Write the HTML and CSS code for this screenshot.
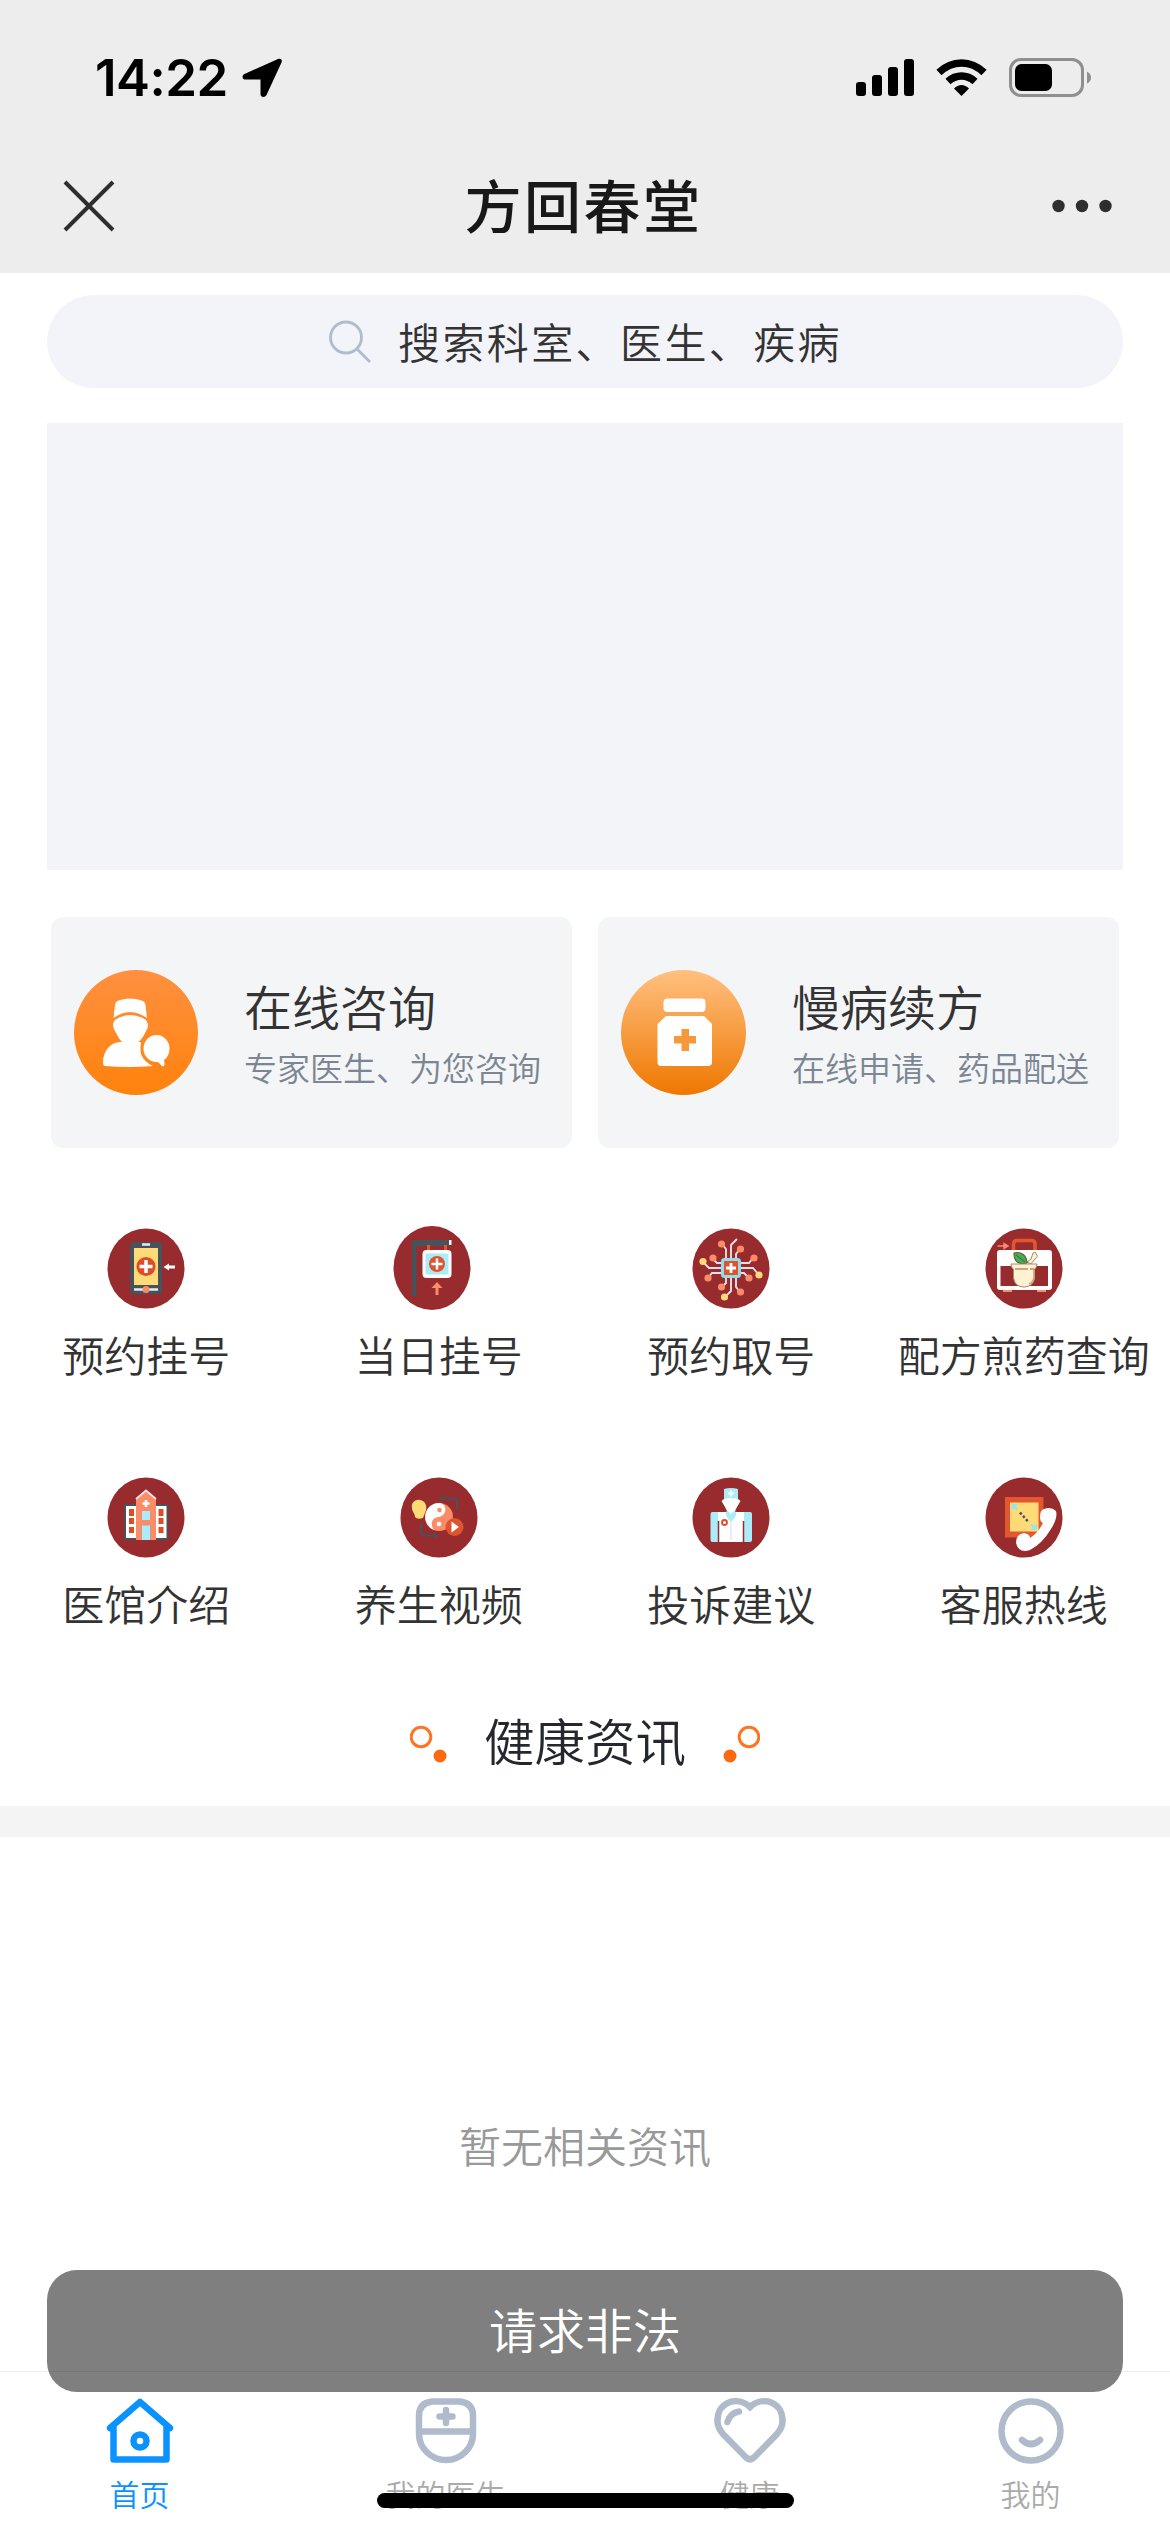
FILE: index.html
```html
<!DOCTYPE html>
<html lang="zh-CN">
<head>
  <meta charset="UTF-8">
  <meta name="viewport" content="width=device-width, initial-scale=1.0">
  <title>方回春堂</title>
  <link rel="stylesheet" href="styles.css">
</head>
<body>

  <header>
    <div class="status-bar">
      <div class="status-left">
        <span class="time">14:22</span>
        <svg width="42" height="42" viewBox="0 0 42 42"><path d="M37 2C40 1 41.500 3 40.500 5.500L25.500 38C24 41 19.500 40.500 19.500 37V22.500H4.500C1 22.500 .5 18.500 3.500 17Z" fill="#000"/></svg>
      </div>
      <div class="status-right">
        <svg width="60" height="40" viewBox="0 0 60 40" fill="#000">
          <rect x="0" y="24" width="10" height="14" rx="3"/>
          <rect x="16" y="17" width="10" height="21" rx="3"/>
          <rect x="32" y="9" width="10" height="29" rx="3"/>
          <rect x="48" y="1" width="10" height="37" rx="3"/>
        </svg>
        <svg class="wifi" width="52" height="40" viewBox="0 0 52 40" fill="none" stroke="#000" stroke-width="7.500">
          <path d="M3 14.500Q13 5 25.500 5T48 14.500"/>
          <path d="M12 23.500Q18 18 25.500 18T39 23.500"/>
          <path d="M25.500 38L18 30.500Q21.500 27 25.500 27T33 30.500Z" fill="#000" stroke="none"/>
        </svg>
        <svg width="84" height="40" viewBox="0 0 84 40">
          <rect x="1.500" y="1.500" width="72" height="36" rx="10.500" fill="none" stroke="#8f8f8f" stroke-width="3"/>
          <rect x="6" y="6" width="37" height="27" rx="6.500" fill="#000"/>
          <path d="M78 13.500Q82 15.500 82 19.500T78 25.500Z" fill="#8f8f8f"/>
        </svg>
      </div>
    </div>
    <div class="nav-bar">
      <svg class="close" width="52" height="52" viewBox="0 0 52 52" stroke="#2e2e2e" stroke-width="4"><path d="M2 2L50 50M50 2L2 50"/></svg>
      <h1>方回春堂</h1>
      <svg width="60" height="14" viewBox="0 0 60 14" fill="#2e2e2e"><circle cx="6.500" cy="7" r="6.200"/><circle cx="30" cy="7" r="6.200"/><circle cx="53.500" cy="7" r="6.200"/></svg>
    </div>
  </header>

  <main>
    <div class="search">
      <svg width="44" height="44" viewBox="0 0 44 44" fill="none" stroke="#afbccd" stroke-width="2.800"><circle cx="18" cy="17.500" r="15.500"/><path d="M29 29L42 42"/></svg>
      <span>搜索科室、医生、疾病</span>
    </div>

    <div class="banner"></div>

    <div class="cards">
      <a class="card">
        <svg width="124" height="125" viewBox="0 0 124 125">
          <defs><linearGradient id="g1" x1="0" y1="0" x2="0" y2="1"><stop offset="0" stop-color="#ff9040"/><stop offset="1" stop-color="#ff820c"/></linearGradient></defs>
          <ellipse cx="62" cy="62.500" rx="62" ry="62.500" fill="url(#g1)"/>
          <g fill="#fff">
            <path d="M39.500 48L41 35Q41.500 31 46 30Q56 27 66 30Q71 31 71.500 35L73 48Q56 36 39.500 48Z"/>
            <path d="M41 50Q56 40 72 50Q76 56 72 61Q68 70 64 72Q65 72 67 72Q66 80 67 84Q70 92 79 96Q54 98 31 96Q29 96 29 92C29 80 38 71 48 72Q45 69 41 61Q37 55 41 50Z"/>
            <path d="M95.500 79A13 13.500 0 1 0 83 92Q85 92 86 94Q88 97 90 96Q91 94 90 90Q95.500 86 95.500 79Z"/>
          </g>
        </svg>
        <div class="card-text">
          <h2>在线咨询</h2>
          <p>专家医生、为您咨询</p>
        </div>
      </a>
      <a class="card">
        <svg width="125" height="125" viewBox="0 0 125 125">
          <defs><linearGradient id="g2" x1="0" y1="0" x2="0" y2="1"><stop offset="0" stop-color="#ffc080"/><stop offset="1" stop-color="#ee7700"/></linearGradient></defs>
          <circle cx="62.500" cy="62.500" r="62.500" fill="url(#g2)"/>
          <g fill="#fff">
            <rect x="42.500" y="28.500" width="42" height="13.500" rx="4"/>
            <path d="M45 46H83L91 54V92Q91 96 87 96H40Q36.500 96 36.500 92V54Z"/>
          </g>
          <path d="M60.500 59H68V66H75V73.500H68V81H60.500V73.500H53V66H60.500Z" fill="#f7983a"/>
        </svg>
        <div class="card-text">
          <h2>慢病续方</h2>
          <p>在线申请、药品配送</p>
        </div>
      </a>
    </div>

    <div class="menu">
      <a class="menu-item">
        <svg width="78" height="84" viewBox="0 0 78 84">
          <ellipse cx="39" cy="42.500" rx="38.500" ry="40" fill="#982b2d"/>
          <rect x="23" y="16" width="32" height="52" rx="4" fill="#47525b"/>
          <rect x="27" y="22" width="24" height="37" fill="#ffda76"/>
          <path d="M35 18.500H43M27 63.500H51" stroke="#e8ecf4" stroke-width="2.500"/>
          <circle cx="39" cy="63.500" r="3.500" fill="#fc8b68"/>
          <circle cx="39" cy="40.500" r="9.500" fill="#de4c25"/>
          <path d="M39 34V47M32.500 40.500H45.500" stroke="#fff" stroke-width="3.500"/>
          <path d="M56.500 41L62 37.500V39.500H68V42.500H62V44.500Z" fill="#fff"/>
        </svg>
        <span>预约挂号</span>
      </a>
      <a class="menu-item">
        <svg class="sign" width="78" height="84" viewBox="0 0 78 84">
          <ellipse cx="39" cy="42" rx="38.500" ry="42" fill="#982b2d"/>
          <path d="M19 14H56V20H23.500V70H19Z" fill="#47525b"/>
          <path d="M56 14H58.500V19H56Z" fill="#fff"/>
          <path d="M35.500 19V26M52.500 19V26" stroke="#e2572d" stroke-width="3"/>
          <rect x="29.500" y="24" width="29" height="28" rx="4" fill="#fff"/>
          <rect x="32.500" y="27.500" width="23" height="21" rx="2" fill="#acebf8"/>
          <circle cx="44" cy="38" r="8" fill="#de5430"/>
          <path d="M44 32.500V43.500M38.500 38H49.500" stroke="#fff" stroke-width="2.500"/>
          <path d="M44 56L49.500 62H45.500V69H42.500V62H38.500Z" fill="#fc8b68"/>
        </svg>
        <span>当日挂号</span>
      </a>
      <a class="menu-item">
        <svg width="78" height="84" viewBox="0 0 78 84">
          <ellipse cx="39" cy="42.500" rx="38.500" ry="40" fill="#982b2d"/>
          <g fill="none" stroke="#e5dfe5" stroke-width="1.900">
            <path d="M34 34V23L30 18M39 34V19L45 13M44 34V28L48 23"/>
            <path d="M31 37H25L21 33M31 42H17L11 36M31 47H20L16 52"/>
            <path d="M47 37H57L61 32M47 42H61L67 49M47 47H52L57 52"/>
            <path d="M34 50V57L30 61M39 50V65L33 71M44 50V61L48 66"/>
          </g>
          <g fill="#fc8b68">
            <circle cx="29.500" cy="18" r="3.600"/><circle cx="48.500" cy="23" r="3.600"/><circle cx="21" cy="32" r="3.600"/><circle cx="62" cy="32" r="3.600"/>
            <circle cx="16" cy="52" r="3.600"/><circle cx="57" cy="52" r="3.600"/><circle cx="29.500" cy="61" r="3.600"/><circle cx="48.500" cy="66" r="3.600"/>
          </g>
          <g fill="#ffda76"><circle cx="11" cy="35.500" r="3.600"/><circle cx="67" cy="49" r="3.600"/><circle cx="32.500" cy="71" r="3.600"/></g>
          <rect x="30.500" y="33.500" width="17" height="17" rx="2" fill="#de5430" stroke="#95dce6" stroke-width="3"/>
          <path d="M39 37V47M34 42H44" stroke="#fff" stroke-width="2.800"/>
        </svg>
        <span>预约取号</span>
      </a>
      <a class="menu-item">
        <svg width="78" height="84" viewBox="0 0 78 84">
          <ellipse cx="39" cy="42.500" rx="38.500" ry="40" fill="#982b2d"/>
          <path d="M28.500 25V18Q28.500 14.500 32 14.500H46.500Q50 14.500 50 18V25" fill="none" stroke="#e2572d" stroke-width="3.500"/>
          <path d="M12.500 20H19V17.500L23 20L19 22.500V20" fill="#fc8b68" stroke="#fc8b68" stroke-width="1.500"/>
          <path d="M18 62H27V66H18ZM52 62H61V66H52Z" fill="#fc8b68"/>
          <rect x="12" y="24" width="55" height="40" rx="3" fill="#fff"/>
          <rect x="15.500" y="40" width="47.500" height="20" fill="#982b2d"/>
          <path d="M46 38L42 36L46 33L48 27Q51 25 51 28Q54 30 50 33L45 39" fill="#fff1d2" stroke="#a68a6c" stroke-width="1"/>
          <path d="M29 27Q41 25 42 37Q29 40 29 27Z" fill="#49ad56" stroke="#5c6637" stroke-width="1.200"/>
          <path d="M31 29L40 36" stroke="#286b36" stroke-width="1"/>
          <path d="M26 38H52Q52 42 49.500 43V52Q48 61 39 61T28.500 52V43Q26 42 26 38Z" fill="#fff1d2" stroke="#a68a6c" stroke-width="1"/>
          <path d="M30 43H43M45 43H49M49 44V52Q48 57 44 58" fill="none" stroke="#c9a77e" stroke-width="1.800"/>
        </svg>
        <span>配方煎药查询</span>
      </a>
      <a class="menu-item">
        <svg width="78" height="84" viewBox="0 0 78 84">
          <ellipse cx="39" cy="42.500" rx="38.500" ry="40" fill="#982b2d"/>
          <rect x="17" y="29" width="44.500" height="36" fill="#47525b"/>
          <rect x="19" y="31" width="40.500" height="32" fill="#fff"/>
          <path d="M22 34H27V41H22ZM22 43H27V49H22ZM22 52H27V58H22ZM51.500 34H56.500V41H51.500ZM51.500 43H56.500V49H51.500ZM51.500 52H56.500V58H51.500Z" fill="#de4c25"/>
          <path d="M29 65V24L39 15.500L49 24V65Z" fill="#fc8b68"/>
          <path d="M29 24L39 15.500L49 24" fill="none" stroke="#f7e8e6" stroke-width="1.800"/>
          <path d="M39 25V32M35.500 28.500H42.500" stroke="#fff" stroke-width="2.500"/>
          <path d="M35 36H43V45H35ZM35 50H43V65H35Z" fill="#acebf8"/>
          <path d="M34 65V50H44V65" fill="none" stroke="#d99788" stroke-width="1"/>
        </svg>
        <span>医馆介绍</span>
      </a>
      <a class="menu-item">
        <svg width="78" height="84" viewBox="0 0 78 84">
          <ellipse cx="39" cy="42.500" rx="38.500" ry="40" fill="#982b2d"/>
          <path d="M57 35V25Q57 23.500 55 23.500H42M21 49V58Q21 60.500 24 60.500H36" fill="none" stroke="#47525b" stroke-width="2"/>
          <path d="M39.500 23.500L44 20.500V26.500ZM39 60.500L34 57.500V63.500Z" fill="#47525b"/>
          <path d="M20 25C15 24 11 28 12 33C12 37 15 38 15 42Q17 45 23 43L26 35C27 30 25 26 20 25Z" fill="#ffda76"/>
          <circle cx="39" cy="42" r="14" fill="#fc8b68"/>
          <path d="M39 28A14 14 0 0 0 34 55C29 48 33 42 39 42C48 40 47 28 39 28Z" fill="#fff"/>
          <circle cx="39.500" cy="35" r="2.300" fill="#fc8b68"/><circle cx="39" cy="49" r="2.300" fill="#fff"/>
          <circle cx="54.500" cy="52" r="9" fill="#de5430"/>
          <path d="M51.500 46.500L59 52L51.500 57.500Z" fill="#fff"/>
        </svg>
        <span>养生视频</span>
      </a>
      <a class="menu-item">
        <svg width="78" height="84" viewBox="0 0 78 84">
          <ellipse cx="39" cy="42.500" rx="38.500" ry="40" fill="#982b2d"/>
          <rect x="18.500" y="37" width="41.500" height="30" rx="2" fill="#acebf8"/>
          <path d="M26 37H52V67H26Z" fill="#fff"/>
          <path d="M26.500 46V67M51.500 46V67" stroke="#982b2d" stroke-width="1.500"/>
          <path d="M32 14Q39 12 46 14V25H32Z" fill="#acebf8"/>
          <path d="M39 15.500V21.500M36 18.500H42" stroke="#fff" stroke-width="1.800"/>
          <path d="M32 24Q39 22 46 24L48.500 26L45 32L42 38Q39 41 36 38L33 32L29.500 26Z" fill="#fff"/>
          <path d="M33.500 37L36 36L39 39L42 36L44.500 37Q44 43 39 47Q34 43 33.500 37Z" fill="#acebf8"/>
          <path d="M39 47V65" stroke="#e4e8e8" stroke-width="1.500"/>
          <circle cx="32.500" cy="47.500" r="2.500" fill="none" stroke="#de4c25" stroke-width="1.800"/>
        </svg>
        <span>投诉建议</span>
      </a>
      <a class="menu-item">
        <svg width="78" height="84" viewBox="0 0 78 84">
          <ellipse cx="39" cy="42.500" rx="38.500" ry="40" fill="#982b2d"/>
          <rect x="20" y="22" width="38.500" height="40.500" fill="#e2572d"/>
          <rect x="25" y="27.500" width="28.500" height="29" fill="#ffda76"/>
          <path d="M26.500 29H33L31 31.500L33 34L31.500 35.500L29 33.500L26.500 35.500ZM52 55H45.500L47.500 52.500L45 50L46.500 48.500L49.500 51L52 48.500Z" fill="#95e5ed"/>
          <path d="M35 37.500L43 46.500" stroke="#47525b" stroke-width="2.500" stroke-dasharray="2.500 2"/>
          <path d="M59 34Q66 31 71 36Q73 43 66 54Q57 69 45 75Q34 79 31 68Q31 59 39 58Q45 59 45 63Q53 58 58 48Q55 47 55 42Q55 35 59 34Z" fill="#fff"/>
        </svg>
        <span>客服热线</span>
      </a>
    </div>

    <div class="section-title">
      <svg width="38" height="38" viewBox="0 0 38 38"><circle cx="11" cy="12" r="9.800" fill="none" stroke="#fd7521" stroke-width="3"/><circle cx="30" cy="31" r="6.500" fill="#fa690f"/></svg>
      <h2>健康资讯</h2>
      <svg width="38" height="38" viewBox="0 0 38 38"><circle cx="27" cy="12" r="9.800" fill="none" stroke="#fd7521" stroke-width="3"/><circle cx="8" cy="31" r="6.500" fill="#fa690f"/></svg>
    </div>
    <div class="divider"></div>
    <p class="empty">暂无相关资讯</p>
  </main>

  <nav class="tab-bar">
    <a class="tab active">
      <svg width="68" height="66" viewBox="0 0 68 66" fill="none" stroke="#0a93ff" stroke-width="6.500" stroke-linecap="round" stroke-linejoin="round"><path d="M4 30L34 4L64 30M7.500 29V61.500H60.500V29"/><circle cx="34" cy="43" r="6.500"/></svg>
      <span>首页</span>
    </a>
    <a class="tab tab-wide">
      <svg width="62" height="66" viewBox="0 0 62 66" fill="none" stroke="#afbacb" stroke-width="6.500" stroke-linecap="round"><path d="M17 3.500H45Q58 5 58 18V36C58 50 46 62 31 62S4 50 4 36V18Q4 5 17 3.500ZM4 33.500H58M31 12V25M24.500 18.500H37.500"/></svg>
      <span>我的医生</span>
    </a>
    <a class="tab tab-health">
      <svg width="72" height="66" viewBox="0 0 72 66" fill="none" stroke="#afbacb" stroke-width="6.500" stroke-linecap="round"><path d="M36 9C24-2 4 3 3.500 22Q3 29 9 36L32 59.500Q36 63 40 59.500L63 36Q69 29 68.500 22C68 3 48-2 36 9Z"/><path d="M13.500 24Q16 15 25 13.500"/></svg>
      <span>健康</span>
    </a>
    <a class="tab">
      <svg width="68" height="66" viewBox="0 0 68 66" fill="none" stroke="#afbacb" stroke-width="6.500" stroke-linecap="round"><ellipse cx="34" cy="33" rx="29.500" ry="29.500"/><path d="M25 42Q34 50 43 42"/></svg>
      <span>我的</span>
    </a>
  </nav>

  <div class="toast">请求非法</div>
  <div class="home-indicator"></div>

</body>
</html>
```
FILE: styles.css
```css
* {
  margin: 0;
  padding: 0;
  box-sizing: border-box;
}

body {
  width: 1170px;
  height: 2532px;
  position: relative;
  overflow: hidden;
  background-color: #fff;
  color: #333;
  font-family: "Noto Sans CJK SC", sans-serif;
  font-weight: 350;
}

svg {
  display: block;
  flex-shrink: 0;
}

header {
  height: 273px;
  background-color: #ededed;
}

.status-bar {
  display: flex;
  justify-content: space-between;
  padding: 58px 77px 0 95px;
  height: 140px;
}

.status-left,
.status-right {
  display: flex;
  height: 40px;
  align-items: center;
}

.time {
  font-family: Inter, sans-serif;
  font-size: 51px;
  font-weight: 600;
  letter-spacing: -0.5px;
  color: #000;
  width: 146px;
  margin-top: -2px;
}

.wifi {
  margin: 0 21px 0 20px;
}

.nav-bar {
  display: flex;
  justify-content: space-between;
  align-items: center;
  height: 131px;
  padding: 0 58px 0 63px;
}

.nav-bar h1 {
  font-size: 57px;
  font-weight: 500;
  letter-spacing: 2.5px;
  line-height: 80px;
  padding-bottom: 5px;
  color: #181818;
}

.search {
  display: flex;
  align-items: center;
  justify-content: center;
  gap: 26px;
  height: 93px;
  margin: 22px 47px 35px;
  border-radius: 47px;
  background-color: #f3f4f9;
  font-size: 42px;
  letter-spacing: 2.4px;
}

.search span {
  line-height: 60px;
  padding-bottom: 2px;
}

.banner {
  height: 447px;
  margin: 0 47px;
  background-color: #f2f4f9;
}

.cards {
  display: flex;
  gap: 26px;
  padding: 47px 51px 0;
}

.card {
  display: flex;
  flex: 1;
  align-items: center;
  height: 231px;
  padding-left: 23px;
  border-radius: 12px;
  background-color: #f3f5f7;
}

.card-text {
  margin-left: 46px;
  padding-top: 4px;
}

.card h2 {
  font-size: 48px;
  font-weight: 350;
  line-height: 64px;
}

.card p {
  font-size: 33px;
  line-height: 60px;
  color: #7b8593;
}

.menu {
  display: grid;
  grid-template-columns: repeat(4, 1fr);
  row-gap: 88px;
  padding-top: 78px;
}

.menu-item {
  display: flex;
  flex-direction: column;
  align-items: center;
  height: 161px;
  font-size: 42px;
  line-height: 60px;
  white-space: nowrap;
}

.menu-item svg {
  margin-bottom: 14px;
}

.menu-item .sign {
  margin-right: 13px;
}

.section-title {
  display: flex;
  justify-content: center;
  align-items: center;
  gap: 36px;
  height: 170px;
  padding-top: 45px;
}

.section-title h2 {
  margin-top: -10px;
  font-size: 50.5px;
  font-weight: 350;
  color: #24282e;
}

.divider {
  height: 31px;
  background-color: #f4f4f4;
}

.empty {
  padding-top: 278px;
  text-align: center;
  font-size: 42px;
  line-height: 60px;
  color: #999;
}

.tab-bar {
  position: absolute;
  left: 0;
  bottom: 0;
  width: 100%;
  height: 161px;
  display: flex;
  justify-content: space-around;
  padding-top: 26px;
  border-top: 1px solid #eee;
  background-color: #fff;
}

.tab {
  width: 68px;
  display: flex;
  flex-direction: column;
  align-items: center;
  font-size: 30px;
  line-height: 40px;
  white-space: nowrap;
  color: #aaa;
}

.tab svg {
  margin-bottom: 9px;
}

.tab-wide {
  width: 122px;
}

.tab-health {
  margin: 0 2px 0 -2px;
}

.active {
  color: #0a93ff;
}

.toast {
  position: absolute;
  left: 47px;
  right: 47px;
  top: 2270px;
  height: 122px;
  border-radius: 30px;
  background-color: rgba(0, 0, 0, 0.5);
  color: #fff;
  font-size: 48px;
  line-height: 116px;
  text-align: center;
}

.home-indicator {
  position: absolute;
  left: 377px;
  top: 2493px;
  width: 417px;
  height: 15px;
  border-radius: 8px;
  background-color: #000;
}
```
